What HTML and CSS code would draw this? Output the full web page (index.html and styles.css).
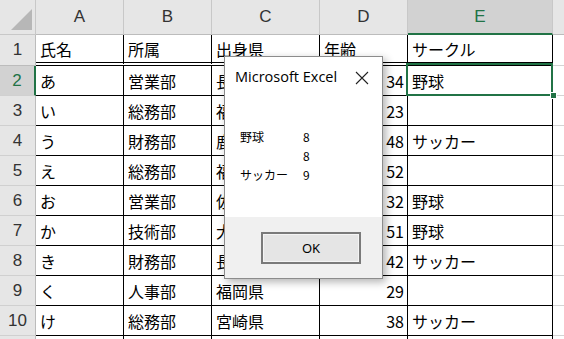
FILE: index.html
```html
<!DOCTYPE html>
<html lang="ja">
<head>
    <meta charset="UTF-8">
    <title>Microsoft Excel</title>
    <link rel="stylesheet" href="styles.css">
</head>
<body>
    <div class="sheet">
        <div class="corner"></div>
        <div class="colhead">A</div>
        <div class="colhead">B</div>
        <div class="colhead">C</div>
        <div class="colhead">D</div>
        <div class="colhead active">E</div>
        <div class="colhead blank"></div>

        <div class="rowhead first">1</div>
        <div class="cell first">氏名</div>
        <div class="cell first">所属</div>
        <div class="cell first">出身県</div>
        <div class="cell first">年齢</div>
        <div class="cell first">サークル</div>
        <div class="grid first"></div>

        <div class="rowhead active">2</div>
        <div class="cell">あ</div>
        <div class="cell">営業部</div>
        <div class="cell">長崎県</div>
        <div class="cell num">34</div>
        <div class="cell sel">野球</div>
        <div class="grid"></div>

        <div class="rowhead">3</div>
        <div class="cell">い</div>
        <div class="cell">総務部</div>
        <div class="cell">福岡県</div>
        <div class="cell num">23</div>
        <div class="cell"></div>
        <div class="grid"></div>

        <div class="rowhead">4</div>
        <div class="cell">う</div>
        <div class="cell">財務部</div>
        <div class="cell">鹿児島県</div>
        <div class="cell num">48</div>
        <div class="cell">サッカー</div>
        <div class="grid"></div>

        <div class="rowhead">5</div>
        <div class="cell">え</div>
        <div class="cell">総務部</div>
        <div class="cell">福岡県</div>
        <div class="cell num">52</div>
        <div class="cell"></div>
        <div class="grid"></div>

        <div class="rowhead">6</div>
        <div class="cell">お</div>
        <div class="cell">営業部</div>
        <div class="cell">佐賀県</div>
        <div class="cell num">32</div>
        <div class="cell">野球</div>
        <div class="grid"></div>

        <div class="rowhead">7</div>
        <div class="cell">か</div>
        <div class="cell">技術部</div>
        <div class="cell">大分県</div>
        <div class="cell num">51</div>
        <div class="cell">野球</div>
        <div class="grid"></div>

        <div class="rowhead">8</div>
        <div class="cell">き</div>
        <div class="cell">財務部</div>
        <div class="cell">長崎県</div>
        <div class="cell num">42</div>
        <div class="cell">サッカー</div>
        <div class="grid"></div>

        <div class="rowhead">9</div>
        <div class="cell">く</div>
        <div class="cell">人事部</div>
        <div class="cell">福岡県</div>
        <div class="cell num">29</div>
        <div class="cell"></div>
        <div class="grid"></div>

        <div class="rowhead">10</div>
        <div class="cell">け</div>
        <div class="cell">総務部</div>
        <div class="cell">宮崎県</div>
        <div class="cell num">38</div>
        <div class="cell">サッカー</div>
        <div class="grid"></div>

        <div class="rowhead"></div>
        <div class="cell"></div>
        <div class="cell"></div>
        <div class="cell"></div>
        <div class="cell"></div>
        <div class="cell"></div>
        <div class="grid"></div>
    </div>

    <!-- メッセージボックス -->
    <div class="msgbox">
        <div class="msg-title">
            <span>Microsoft Excel</span>
            <svg class="msg-close" width="14" height="14" viewBox="0 0 14 14">
                <path d="M1 1 L13 13 M13 1 L1 13" stroke="#222" stroke-width="1.1" fill="none"/>
            </svg>
        </div>
        <div class="msg-body">
            <span>野球</span><span>8</span>
            <span></span><span>8</span>
            <span>サッカー</span><span>9</span>
        </div>
        <div class="msg-foot">
            <button class="msg-ok">OK</button>
        </div>
    </div>
</body>
</html>
```

FILE: styles.css
```css
body {
    margin: 0;
    background: #fff;
    overflow: hidden;
    font-family: "Noto Sans CJK JP", sans-serif;
}

/* シート */
.sheet {
    display: grid;
    grid-template-columns: 36px 88px 88px 108px 88px 145px 11px;
    grid-template-rows: 35px 31px repeat(10, 30px);
    height: 339px;
    overflow: hidden;
    font-size: 16px;
    color: #000;
}

.corner {
    position: relative;
    background: #e6e6e6;
    border-right: 1px solid #c8c8c8;
    border-bottom: 1px solid #c8c8c8;
}

.corner::after {
    content: '';
    position: absolute;
    right: 3px;
    bottom: 4px;
    width: 21px;
    height: 21px;
    background: #b7b7b7;
    clip-path: polygon(100% 0, 100% 100%, 0 100%);
}

.colhead {
    display: flex;
    align-items: center;
    justify-content: center;
    background: #e6e6e6;
    color: #333;
    font-family: "Liberation Sans", sans-serif;
    font-size: 17px;
    border-right: 1px solid #c8c8c8;
    border-bottom: 1px solid #bcbcbc;
    box-sizing: border-box;
}

.colhead.active {
    background: #d2d2d2;
    color: #217346;
    border-bottom: 2px solid #217346;
}

.colhead.blank {
    border-right: none;
}

.rowhead {
    display: flex;
    align-items: center;
    justify-content: center;
    background: #e6e6e6;
    color: #333;
    font-family: "Liberation Sans", sans-serif;
    font-size: 17px;
    border-right: 1px solid #bcbcbc;
    border-bottom: 1px solid #d0d0d0;
    box-sizing: border-box;
}

.rowhead.active {
    background: #d2d2d2;
    color: #217346;
    border-right: 2px solid #217346;
}

.cell {
    display: flex;
    align-items: center;
    padding: 0 4px;
    border-right: 1px solid #000;
    border-bottom: 1px solid #000;
    box-sizing: border-box;
    white-space: nowrap;
    overflow: hidden;
}

.cell.first {
    border-bottom: 4px double #000;
}

.rowhead.first {
    border-bottom: 1px solid #bcbcbc;
}

.grid.first {
    border-bottom: 1px solid #d4d4d4;
}

.cell.num {
    justify-content: flex-end;
    padding-right: 3px;
}

.grid {
    border-bottom: 1px solid #d4d4d4;
    box-sizing: border-box;
}

.cell.sel {
    position: relative;
    overflow: visible;
}

.cell.sel::after {
    content: '';
    position: absolute;
    left: -2px;
    top: -3px;
    right: -1px;
    bottom: -1px;
    border: 2px solid #217346;
}

.cell.sel::before {
    content: '';
    position: absolute;
    right: -5px;
    bottom: -4px;
    width: 5px;
    height: 5px;
    background: #217346;
    border: 1px solid #fff;
    z-index: 1;
}

/* メッセージボックス */
.msgbox {
    position: absolute;
    left: 224px;
    top: 56px;
    width: 159px;
    height: 223px;
    box-sizing: border-box;
    background: #fff;
    border: 1px solid #8c8c8c;
    box-shadow: 3px 3px 8px rgba(0, 0, 0, 0.3);
    display: flex;
    flex-direction: column;
}

.msg-title {
    display: flex;
    align-items: center;
    justify-content: space-between;
    height: 39px;
    padding: 0 13px 0 10px;
    font-family: "Open Sans", "Noto Sans", sans-serif;
    font-size: 14.5px;
    color: #000;
}

.msg-close {
    margin-top: 3px;
}

.msg-body {
    display: grid;
    grid-template-columns: 63px auto;
    margin: 31px 0 0 15px;
    font-size: 12px;
    line-height: 19px;
    color: #000;
}

.msg-foot {
    margin-top: auto;
    height: 61px;
    background: #f0f0f0;
    padding: 15px 0 0 36px;
    box-sizing: border-box;
}

.msg-ok {
    width: 100px;
    height: 32px;
    border: 2px solid #7a7a7a;
    background: #e5e5e5;
    box-shadow: inset 0 0 0 1px #f4f4f4;
    font-family: "Noto Sans", sans-serif;
    font-size: 13px;
    color: #000;
    padding: 0;
}
```
